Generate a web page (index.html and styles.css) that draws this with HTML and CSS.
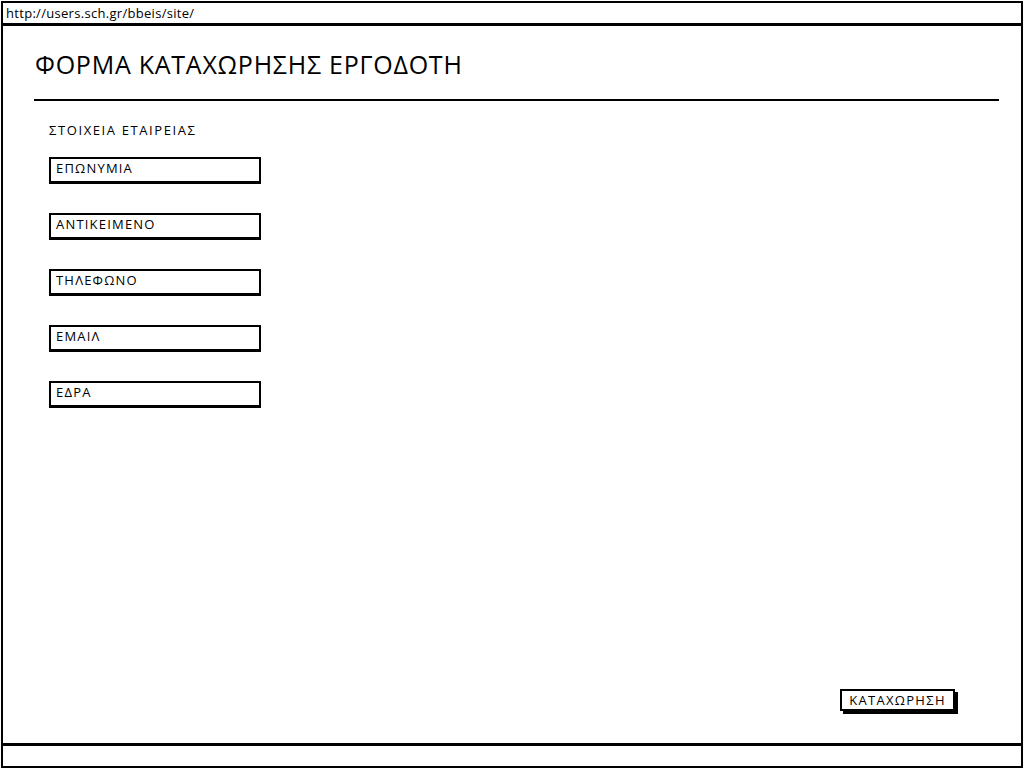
FILE: index.html
```html
<!DOCTYPE html>
<html lang="el">
<head>
<meta charset="utf-8">
<title>Φόρμα καταχώρησης εργοδότη</title>
<link rel="stylesheet" href="styles.css">
</head>
<body>
<div class="window">
  <div class="urlbar">http://users.sch.gr/bbeis/site/</div>
  <div class="content">
    <h1 class="title">ΦΟΡΜΑ ΚΑΤΑΧΩΡΗΣΗΣ ΕΡΓΟΔΟΤΗ</h1>
    <div class="rule"></div>
    <div class="section">ΣΤΟΙΧΕΙΑ ΕΤΑΙΡΕΙΑΣ</div>
    <div class="fields">
      <div class="field">ΕΠΩΝΥΜΙΑ</div>
      <div class="field">ΑΝΤΙΚΕΙΜΕΝΟ</div>
      <div class="field">ΤΗΛΕΦΩΝΟ</div>
      <div class="field">ΕΜΑΙΛ</div>
      <div class="field">ΕΔΡΑ</div>
    </div>
    <div class="spacer"></div>
    <div class="actions">
      <div class="button">ΚΑΤΑΧΩΡΗΣΗ</div>
    </div>
  </div>
  <div class="statusbar"></div>
</div>
</body>
</html>
```
FILE: styles.css
```css
html, body {
  margin: 0;
  padding: 0;
  background: #ffffff;
}
body {
  font-family: "Open Sans", "DejaVu Sans", sans-serif;
  color: #000;
}
.window {
  box-sizing: border-box;
  width: 1022px;
  height: 767px;
  margin: 1px 0 0 1px;
  border: 2px solid #000;
  display: flex;
  flex-direction: column;
}
.urlbar {
  box-sizing: border-box;
  height: 23px;
  border-bottom: 3px solid #000;
  padding: 2px 0 0 3px;
  font-size: 13px;
  line-height: 16px;
  letter-spacing: 0.3px;
}
.content {
  flex: 1;
  display: flex;
  flex-direction: column;
  padding: 0 22px 0 31px;
}
.title {
  margin: 23px 0 0 1px;
  font-weight: normal;
  font-size: 25px;
  line-height: 30px;
  height: 30px;
  letter-spacing: 0.75px;
}
.rule {
  margin-top: 20px;
  height: 2px;
  background: #000;
}
.section {
  margin: 21px 0 0 15px;
  font-size: 13px;
  line-height: 16px;
  letter-spacing: 1.6px;
}
.fields {
  margin: 19px 0 0 15px;
  display: flex;
  flex-direction: column;
  gap: 29px;
}
.field {
  box-sizing: border-box;
  width: 212px;
  height: 27px;
  border: 2px solid #000;
  border-bottom-width: 3px;
  padding: 1px 0 0 5px;
  font-size: 13px;
  line-height: 16px;
  letter-spacing: 1.2px;
}
.spacer {
  flex: 1;
}
.actions {
  display: flex;
  justify-content: flex-end;
  padding-right: 44px;
  margin-bottom: 32px;
}
.button {
  box-sizing: border-box;
  width: 115px;
  height: 22px;
  border: 2px solid #000;
  box-shadow: 3px 3px 0 #000;
  text-align: center;
  font-size: 13px;
  line-height: 18px;
  letter-spacing: 1.3px;
}
.statusbar {
  height: 20px;
  border-top: 3px solid #000;
}
```
